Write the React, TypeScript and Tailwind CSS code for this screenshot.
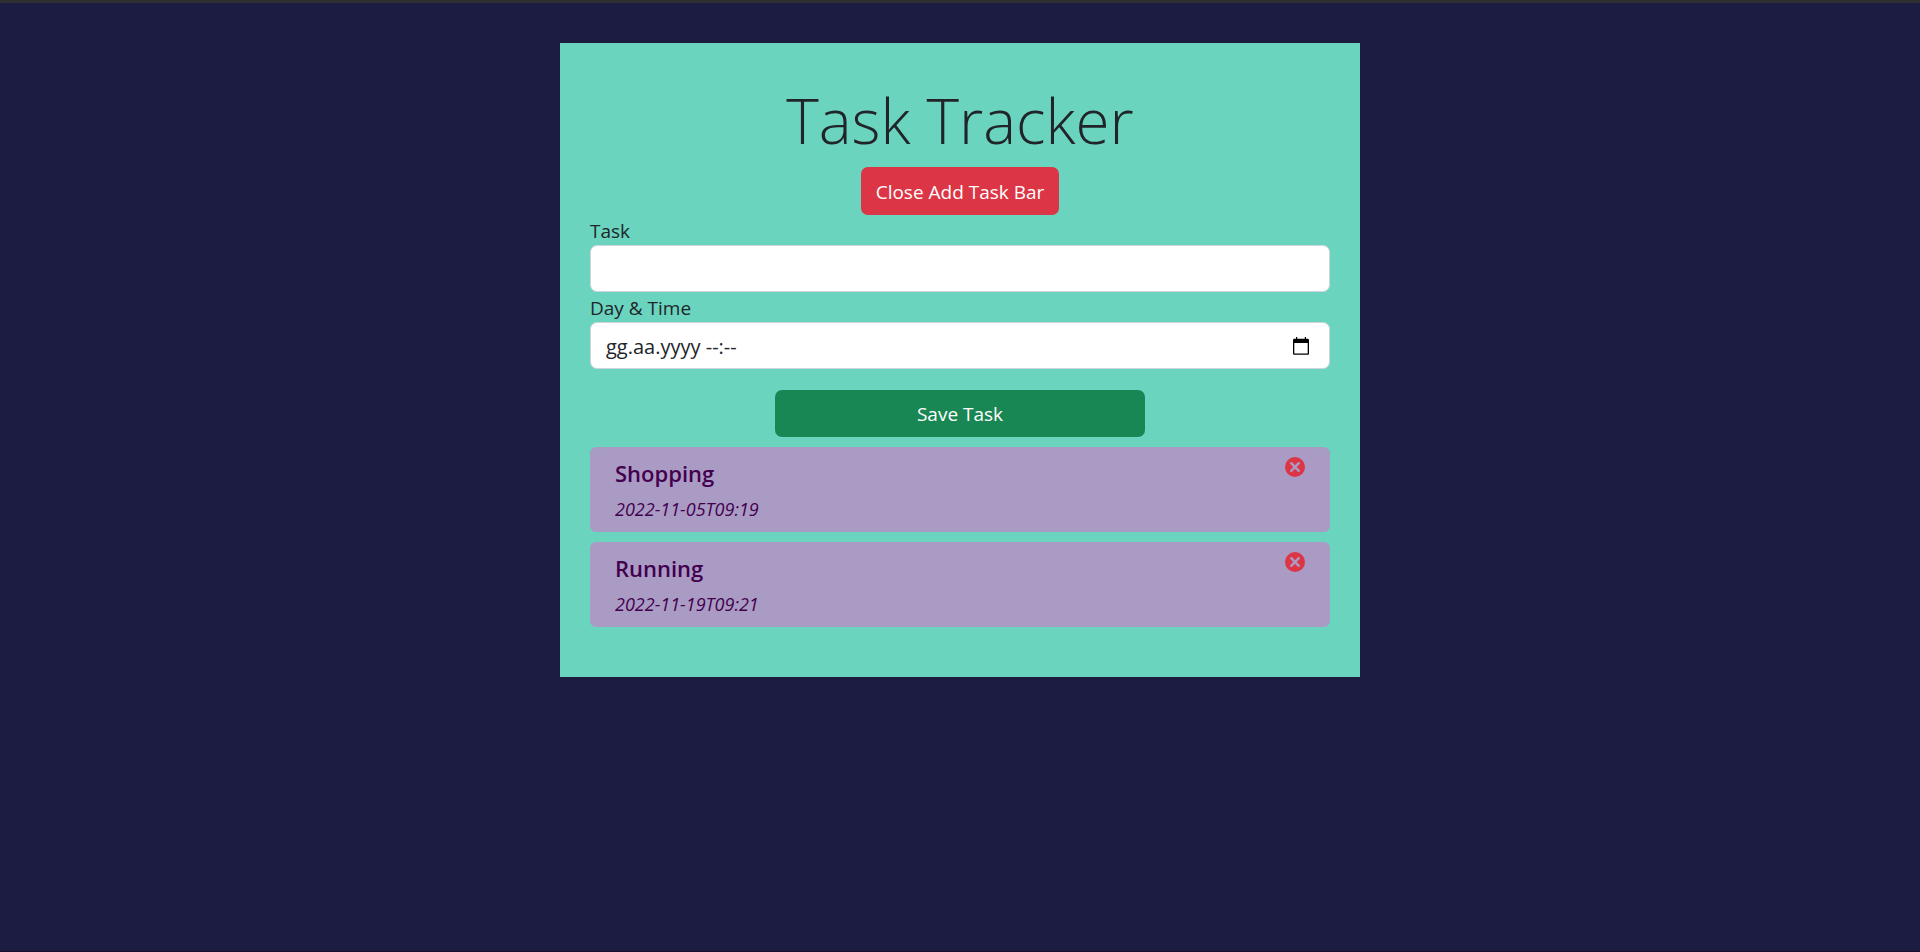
import { useState } from "react";

type Task = { id: number; text: string; day: string };

const initialTasks: Task[] = [
  { id: 1, text: "Shopping", day: "2022-11-05T09:19" },
  { id: 2, text: "Running", day: "2022-11-19T09:21" },
];

const fieldClass =
  "block h-[47px] w-full rounded-[7px] border border-[#ced4da] bg-white px-[15px] pt-[2px] text-[20px] text-[#212529] outline-none";

function CalendarIcon() {
  return (
    <svg viewBox="0 0 16 18" className="h-[18px] w-4" aria-hidden="true">
      <path
        fill="#000"
        fillRule="evenodd"
        d="M3 0h1.2v1.8h7.6V0H13v1.800h1.600c.8 0 1.400.6 1.400 1.400v13.200c0 .8-.6 1.400-1.400 1.400H1.400C.6 17.800 0 17.200 0 16.400V3.200c0-.8.6-1.400 1.400-1.400H3zM1.300 6v10.600h13.400V6z"
      />
    </svg>
  );
}

function CloseCircleIcon() {
  return (
    <svg viewBox="0 0 20 20" className="size-5" aria-hidden="true">
      <circle cx="10" cy="10" r="10" fill="#dc3545" />
      <path d="M6.200 6.200 13.800 13.800M13.800 6.200 6.200 13.800" stroke="#aa9bc4" strokeWidth="2.4" strokeLinecap="round" />
    </svg>
  );
}

function TaskForm() {
  return (
    <form onSubmit={(e) => e.preventDefault()}>
      <label htmlFor="task" className="block pt-[2px] leading-7">
        Task
      </label>
      <input id="task" type="text" className={fieldClass} />
      <label htmlFor="day" className="block pt-[2px] leading-7">
        Day &amp; Time
      </label>
      <div className="relative">
        <input id="day" type="text" defaultValue="gg.aa.yyyy --:--" className={fieldClass} />
        <button type="button" aria-label="Choose date" className="absolute inset-y-0 right-[21px] flex items-center">
          <CalendarIcon />
        </button>
      </div>
      <button
        type="submit"
        className="mx-auto mt-[21px] block h-[47px] w-1/2 rounded-[7px] bg-[#198754] pt-[2px] text-white"
      >
        Save Task
      </button>
    </form>
  );
}

export default function App() {
  const [tasks, setTasks] = useState(initialTasks);
  const [open, setOpen] = useState(true);

  return (
    <div className="min-h-screen border-t-[3px] border-b border-t-[#2f2f2f] border-b-[#180f30] bg-[#1c1b42] pt-10 font-['Open_Sans','Noto_Sans',sans-serif] text-[19px] text-[#212529]">
      <main className="mx-auto max-w-[800px] bg-[#6ad4be] px-[30px] pt-[30px] pb-[50px]">
        <header className="text-center">
          <h1 className="pt-[5px] pb-[5px] text-[62px] leading-[84px] font-light">Task Tracker</h1>
          <button
            type="button"
            onClick={() => setOpen(!open)}
            className="mx-auto block h-12 rounded-[7px] bg-[#dc3545] px-[15px] pt-[2px] text-white"
          >
            {open ? "Close Add Task Bar" : "Show Add Task Bar"}
          </button>
        </header>
        {open && <TaskForm />}
        <ul className="mt-[10px] flex flex-col gap-[10px]">
          {tasks.map((task) => (
            <li
              key={task.id}
              className="flex items-start justify-between rounded-md bg-[#aa9bc4] px-[25px] pt-[10px] pb-[3px] text-[#43004f]"
            >
              <div>
                <h2 className="text-[22px] leading-8 font-semibold">{task.text}</h2>
                <p className="text-[18px] leading-10 italic">{task.day}</p>
              </div>
              <button
                type="button"
                aria-label={`Delete ${task.text}`}
                onClick={() => setTasks(tasks.filter((t) => t.id !== task.id))}
              >
                <CloseCircleIcon />
              </button>
            </li>
          ))}
        </ul>
      </main>
    </div>
  );
}
